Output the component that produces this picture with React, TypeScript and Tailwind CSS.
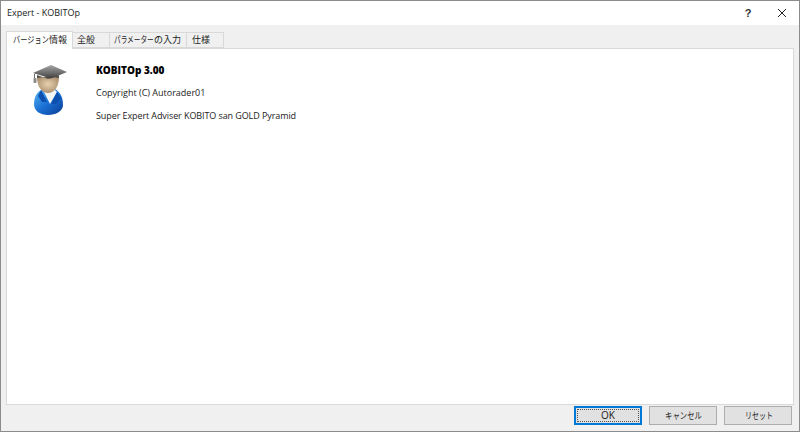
const font = { fontFamily: '"Noto Sans CJK JP", "Noto Sans", sans-serif' };
const latin = { fontFamily: '"Open Sans", sans-serif' };

function GradIcon() {
  return (
    <svg width="36" height="52" viewBox="0 0 36 52">
      <defs>
        <linearGradient id="cap" x1="0" y1="0" x2="0" y2="1">
          <stop offset="0" stopColor="#a5a5a5" />
          <stop offset="0.6" stopColor="#6a6a6a" />
          <stop offset="1" stopColor="#3a3a3a" />
        </linearGradient>
        <linearGradient id="body" x1="0" y1="0" x2="1" y2="1">
          <stop offset="0" stopColor="#58b6f0" />
          <stop offset="0.5" stopColor="#1a70d4" />
          <stop offset="1" stopColor="#0a3c94" />
        </linearGradient>
        <radialGradient id="face" cx="0.5" cy="0.45" r="0.62">
          <stop offset="0" stopColor="#e8d0b0" />
          <stop offset="1" stopColor="#a58a68" />
        </radialGradient>
      </defs>
      <path d="M2 40 C2 32 6 27 11 25 L23 25 C28 28 31 33 31 41 C31 47 24 51 16 51 C8 51 2 47 2 40 Z" fill="url(#body)" />
      <path d="M11 26 L18 40 L25 28 L21 24 L12 24 Z" fill="#f3f6f8" />
      <path d="M9 26 L15 38 L10 38 L6 32 Z" fill="#0c4fae" />
      <path d="M25 28 L19 40 L24 40 L29 34 Z" fill="#0c4fae" />
      <path d="M5 13 C5 23 10 29 16 29 C22 29 27 23 27 13 Z" fill="url(#face)" />
      <path d="M5 14 L5 11 L16 15 L27 11 L27 14 Q16 12 5 14 Z" fill="#55504a" />
      <path d="M1 9 L19 1 L35 8 L19 14.5 Z" fill="url(#cap)" />
      <path d="M2.5 10 L2.5 15" stroke="#666" strokeWidth="1" />
      <rect x="1.5" y="14" width="3" height="5" rx="1" fill="#8a8a8a" />
    </svg>
  );
}

const kana = "inline-block origin-left";

export default function App() {
  return (
    <div className="w-[800px] h-[432px] overflow-hidden bg-[#f0f0f0] flex flex-col border border-[#8c8c8c] text-[#1a1a1a] whitespace-nowrap" style={font}>
      <div className="h-[24px] shrink-0 bg-white flex items-center pl-[6px] text-[9px]">
        <span className="flex-1" style={latin}>Expert - KOBITOp</span>
        <span className="w-[20px] text-center font-bold text-[11px] text-[#333] mr-[19px]" style={{ fontFamily: '"Liberation Sans", sans-serif' }}>?</span>
        <svg width="10" height="10" viewBox="0 0 10 10" className="mr-[12px]"><path d="M1 1 L9 9 M9 1 L1 9" stroke="#222" strokeWidth="1" /></svg>
      </div>
      <div className="flex-1 min-h-0 flex flex-col px-[5px] pt-[7px]">
        <div className="flex items-end h-[17px] text-[9px] -mb-px relative z-10">
          <div className="w-[67px] h-[18px] bg-white border border-b-0 border-[#d9d9d9] flex items-center pl-[6px] pb-[2px]">
            <span className={`${kana} w-[36px] scale-x-[0.8]`}>バージョン</span><span>情報</span>
          </div>
          <div className="w-[37px] h-[16px] bg-[#f0f0f0] border border-l-0 border-[#d9d9d9] flex items-center pl-[4px] mb-px">全般</div>
          <div className="w-[77px] h-[16px] bg-[#f0f0f0] border border-l-0 border-[#d9d9d9] flex items-center pl-[4px] mb-px">
            <span className={`${kana} w-[40px] scale-x-[0.74]`}>パラメーター</span><span>の入力</span>
          </div>
          <div className="w-[37px] h-[16px] bg-[#f0f0f0] border border-l-0 border-[#d9d9d9] flex items-center pl-[5px] mb-px">仕様</div>
        </div>
        <div className="flex-1 min-h-0 bg-white border border-[#d9d9d9] flex pl-[25px] pt-[15px] gap-[28px]">
          <div className="shrink-0"><GradIcon /></div>
          <div className="flex flex-col text-[9px] text-[#222]" style={latin}>
            <div className="font-extrabold text-[10px] leading-[13px] text-black">KOBITOp 3.00</div>
            <div className="leading-[13px] mt-[9px]">Copyright (C) Autorader01</div>
            <div className="leading-[13px] mt-[10px] tracking-[-0.09px]">Super Expert Adviser KOBITO san GOLD Pyramid</div>
          </div>
        </div>
        <div className="h-[26px] shrink-0 flex items-start justify-end gap-[7px] pr-[2px] pt-[1px] text-[9px]">
          <button className="w-[68px] h-[19px] bg-[#e1e1e1] border-2 border-[#0078d7] flex items-center justify-center p-px">
            <span className="w-full h-full border border-dotted border-[#555] flex items-center justify-center text-[10px]" style={latin}>OK</span>
          </button>
          <button className="w-[68px] h-[19px] bg-[#e1e1e1] border border-[#adadad] flex items-center pl-[15px]">
            <span className={`${kana} w-[37px] scale-x-[0.82]`}>キャンセル</span>
          </button>
          <button className="w-[68px] h-[19px] bg-[#e1e1e1] border border-[#adadad] flex items-center pl-[20px]">
            <span className={`${kana} w-[28px] scale-x-[0.78]`}>リセット</span>
          </button>
        </div>
      </div>
    </div>
  );
}
